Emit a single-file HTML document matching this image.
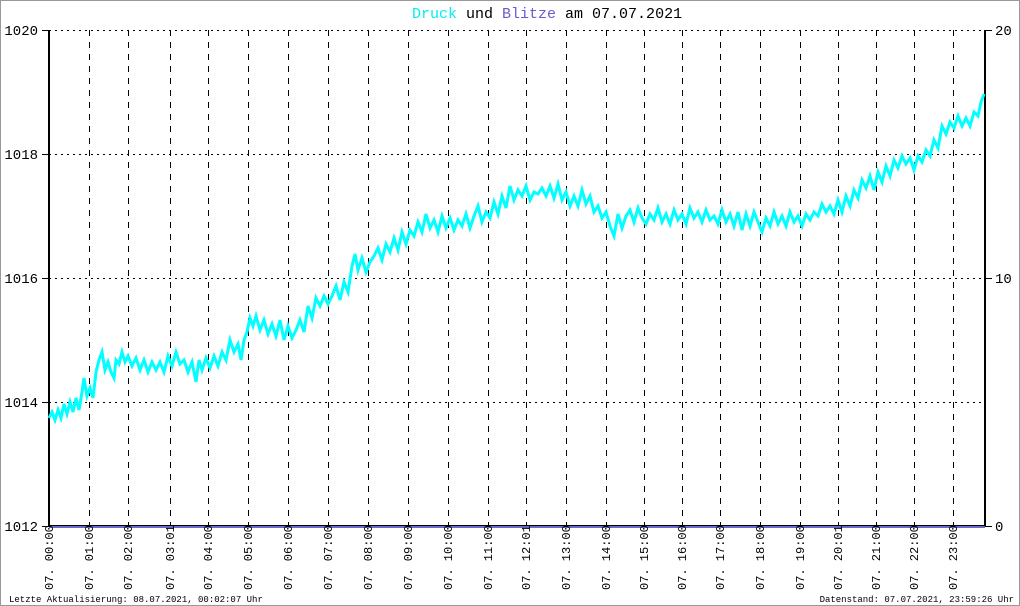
<!DOCTYPE html>
<html><head><meta charset="utf-8"><style>
html,body{margin:0;padding:0;background:#fff}
svg{display:block}
text{font-family:"Liberation Mono","DejaVu Sans Mono",monospace}
</style></head><body>
<svg width="1020" height="606" viewBox="0 0 1020 606" xmlns="http://www.w3.org/2000/svg">
<rect x="0.5" y="0.5" width="1019" height="605" fill="#fff" stroke="#999" stroke-width="1"/>
<text x="412" y="18" font-size="15"><tspan fill="#00f0f0">Druck</tspan><tspan fill="#000"> und </tspan><tspan fill="#6a5acd">Blitze</tspan><tspan fill="#000"> am 07.07.2021</tspan></text>
<g stroke="#000" stroke-width="1" stroke-dasharray="2,4" fill="none">
<line x1="49" y1="30.5" x2="985" y2="30.5"/>
<line x1="49" y1="154.5" x2="985" y2="154.5"/>
<line x1="49" y1="278.5" x2="985" y2="278.5"/>
<line x1="49" y1="402.5" x2="985" y2="402.5"/>
</g>
<g stroke="#000" stroke-width="1" stroke-dasharray="6,6" fill="none">
<line x1="89.5" y1="30" x2="89.5" y2="526"/>
<line x1="128.5" y1="30" x2="128.5" y2="526"/>
<line x1="170.5" y1="30" x2="170.5" y2="526"/>
<line x1="208.5" y1="30" x2="208.5" y2="526"/>
<line x1="248.5" y1="30" x2="248.5" y2="526"/>
<line x1="288.5" y1="30" x2="288.5" y2="526"/>
<line x1="328.5" y1="30" x2="328.5" y2="526"/>
<line x1="368.5" y1="30" x2="368.5" y2="526"/>
<line x1="408.5" y1="30" x2="408.5" y2="526"/>
<line x1="448.5" y1="30" x2="448.5" y2="526"/>
<line x1="488.5" y1="30" x2="488.5" y2="526"/>
<line x1="526.5" y1="30" x2="526.5" y2="526"/>
<line x1="566.5" y1="30" x2="566.5" y2="526"/>
<line x1="606.5" y1="30" x2="606.5" y2="526"/>
<line x1="644.5" y1="30" x2="644.5" y2="526"/>
<line x1="682.5" y1="30" x2="682.5" y2="526"/>
<line x1="720.5" y1="30" x2="720.5" y2="526"/>
<line x1="760.5" y1="30" x2="760.5" y2="526"/>
<line x1="800.5" y1="30" x2="800.5" y2="526"/>
<line x1="838.5" y1="30" x2="838.5" y2="526"/>
<line x1="876.5" y1="30" x2="876.5" y2="526"/>
<line x1="914.5" y1="30" x2="914.5" y2="526"/>
<line x1="953.5" y1="30" x2="953.5" y2="526"/>
</g>
<g stroke="#000" stroke-width="1">
<line x1="49" y1="30" x2="49" y2="526" stroke-width="2"/>
<line x1="985" y1="30" x2="985" y2="526" stroke-width="2"/>
<line x1="42" y1="30.5" x2="49" y2="30.5"/><line x1="42" y1="154.5" x2="49" y2="154.5"/><line x1="42" y1="278.5" x2="49" y2="278.5"/><line x1="42" y1="402.5" x2="49" y2="402.5"/><line x1="42" y1="526.5" x2="49" y2="526.5"/>
<line x1="985" y1="30.5" x2="992" y2="30.5"/><line x1="985" y1="278.5" x2="992" y2="278.5"/><line x1="985" y1="526.5" x2="992" y2="526.5"/>
</g>
<line x1="49" y1="525.5" x2="985" y2="525.5" stroke="#000" stroke-width="1"/>
<line x1="49" y1="527" x2="985" y2="527" stroke="#6a6acd" stroke-width="2"/>
<g font-size="14" fill="#000" text-anchor="end">
<text x="38" y="35">1020</text><text x="38" y="159">1018</text><text x="38" y="283">1016</text><text x="38" y="407">1014</text><text x="38" y="531">1012</text>
</g>
<g font-size="14" fill="#000">
<text x="995" y="35">20</text><text x="995" y="283">10</text><text x="995" y="531">0</text>
</g>
<polyline fill="none" stroke="#00ffff" stroke-width="3" stroke-linejoin="miter" points="
49,418 52,412 55,420 58,410 61,418 64,404 67,414 70,402 73,412 76,398 79,410 82,392 84,378 87,396 90,388 93,398 96,372 99,360 102,352 105,370 108,362 111,372 114,378 116,360 119,364 122,352 125,362 128,356 132,366 136,358 140,370 144,360 148,372 152,362 156,370 160,362 164,372 168,356 172,366 176,352 180,364 184,360 188,372 192,362 196,382 199,360 202,370 206,358 210,368 214,356 218,366 222,352 226,360 230,340 234,352 238,344 241,360 244,340 247,332 250,318 253,326 256,316 260,330 264,320 268,334 272,324 276,336 280,320 284,340 288,326 292,338 296,330 300,320 304,332 308,306 312,318 316,298 320,306 324,296 328,304 332,296 336,286 340,300 344,282 348,292 352,266 355,254 358,270 362,258 366,272 370,262 374,256 378,248 382,260 386,244 390,252 394,238 398,250 402,232 406,244 410,230 414,236 418,222 422,232 426,214 430,228 434,220 438,232 442,216 446,228 450,218 454,230 458,220 462,226 466,214 470,228 474,216 478,206 482,222 486,212 490,218 494,202 498,214 502,196 506,208 510,186 514,200 518,190 522,196 526,186 530,200 534,192 538,194 542,188 546,196 550,186 554,198 558,184 562,200 566,192 570,206 574,196 578,206 582,190 586,204 590,196 594,212 598,206 602,218 606,212 610,226 614,236 618,214 622,228 626,216 630,210 634,222 638,208 642,218 646,224 650,214 654,220 658,208 662,222 666,214 670,224 674,210 678,220 682,214 686,224 690,208 694,218 698,212 702,222 706,210 710,220 714,216 718,224 722,210 726,222 730,214 734,226 738,212 742,230 746,214 750,226 754,212 758,222 762,232 766,218 770,226 774,212 778,224 782,216 786,226 790,212 794,222 798,216 802,226 806,214 810,220 814,212 818,216 822,204 826,212 830,206 834,214 838,200 842,212 846,196 850,206 854,190 858,198 862,180 866,188 870,176 874,190 878,172 882,182 886,166 890,176 894,160 898,168 902,156 906,164 910,158 914,170 918,156 922,162 926,150 930,156 934,140 938,148 942,126 946,134 950,122 954,128 958,116 962,126 966,118 970,126 974,112 978,116 981,102 984,94"/>
<g font-size="12" fill="#000">
<text transform="translate(53,590) rotate(-90)">07. 00:00</text>
<text transform="translate(93,590) rotate(-90)">07. 01:00</text>
<text transform="translate(132,590) rotate(-90)">07. 02:00</text>
<text transform="translate(174,590) rotate(-90)">07. 03:01</text>
<text transform="translate(212,590) rotate(-90)">07. 04:00</text>
<text transform="translate(252,590) rotate(-90)">07. 05:00</text>
<text transform="translate(292,590) rotate(-90)">07. 06:00</text>
<text transform="translate(332,590) rotate(-90)">07. 07:00</text>
<text transform="translate(372,590) rotate(-90)">07. 08:00</text>
<text transform="translate(412,590) rotate(-90)">07. 09:00</text>
<text transform="translate(452,590) rotate(-90)">07. 10:00</text>
<text transform="translate(492,590) rotate(-90)">07. 11:00</text>
<text transform="translate(530,590) rotate(-90)">07. 12:01</text>
<text transform="translate(570,590) rotate(-90)">07. 13:00</text>
<text transform="translate(610,590) rotate(-90)">07. 14:00</text>
<text transform="translate(648,590) rotate(-90)">07. 15:00</text>
<text transform="translate(686,590) rotate(-90)">07. 16:00</text>
<text transform="translate(724,590) rotate(-90)">07. 17:00</text>
<text transform="translate(764,590) rotate(-90)">07. 18:00</text>
<text transform="translate(804,590) rotate(-90)">07. 19:00</text>
<text transform="translate(842,590) rotate(-90)">07. 20:01</text>
<text transform="translate(880,590) rotate(-90)">07. 21:00</text>
<text transform="translate(918,590) rotate(-90)">07. 22:00</text>
<text transform="translate(957,590) rotate(-90)">07. 23:00</text>
</g>
<g font-size="9" fill="#000">
<text x="9" y="602">Letzte Aktualisierung: 08.07.2021, 00:02:07 Uhr</text>
<text x="1014" y="602" text-anchor="end">Datenstand: 07.07.2021, 23:59:26 Uhr</text>
</g>
</svg>
</body></html>
